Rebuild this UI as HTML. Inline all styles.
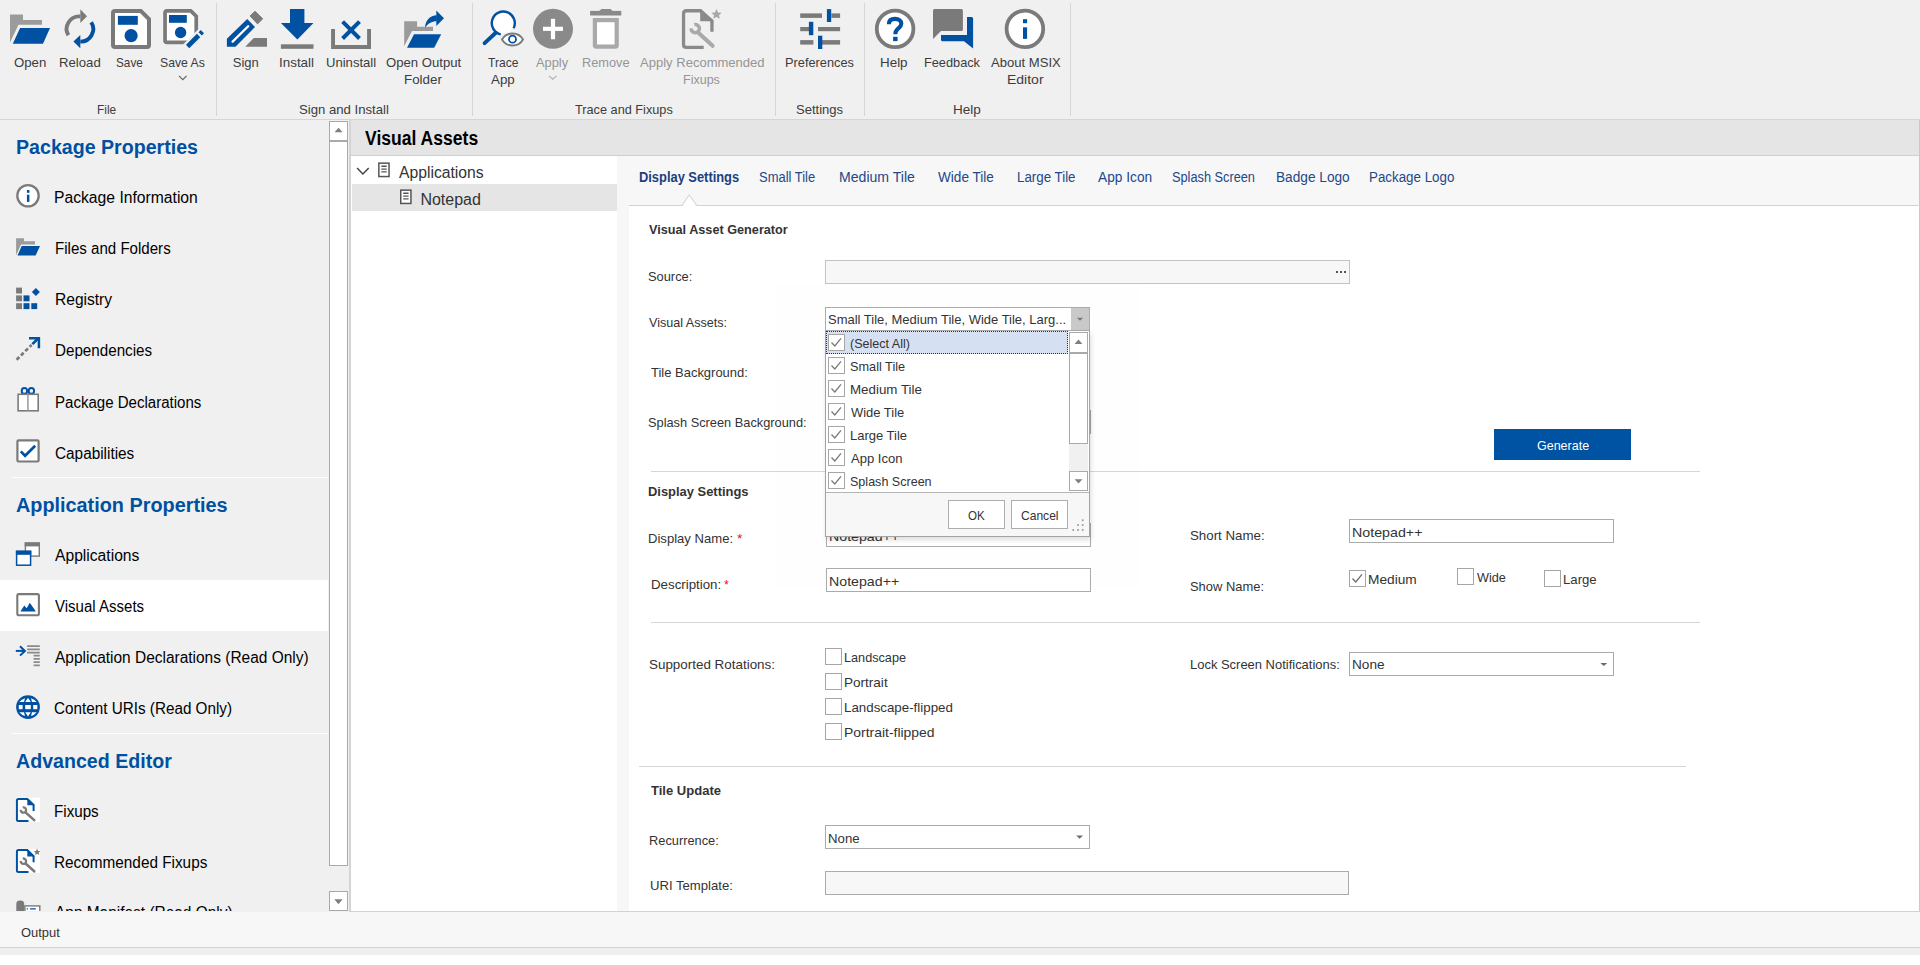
<!DOCTYPE html>
<html><head><meta charset="utf-8"><style>
html,body{margin:0;padding:0;width:1920px;height:965px;overflow:hidden;background:#f0f0f0;position:relative}
.b{position:absolute}
.t{position:absolute;white-space:nowrap;font-family:"Liberation Sans",sans-serif;transform-origin:0 0}
.ov{position:absolute;left:0;top:0}
</style></head><body>
<div class=b style="left:0px;top:0px;width:1920px;height:119px;background:#f0f0f0;"></div>
<div class=b style="left:216px;top:3px;width:1px;height:113px;background:#d6d6d6;"></div>
<div class=b style="left:472px;top:3px;width:1px;height:113px;background:#d6d6d6;"></div>
<div class=b style="left:775px;top:3px;width:1px;height:113px;background:#d6d6d6;"></div>
<div class=b style="left:864px;top:3px;width:1px;height:113px;background:#d6d6d6;"></div>
<div class=b style="left:1070px;top:3px;width:1px;height:113px;background:#d6d6d6;"></div>
<div class=b style="left:0px;top:119px;width:1920px;height:1px;background:#d5d5d5;"></div>
<div class=b style="left:0px;top:120px;width:329px;height:792px;background:#f0f0f0;"></div>
<div class=b style="left:0px;top:580px;width:328px;height:51px;background:#ffffff;"></div>
<div class=b style="left:12px;top:477px;width:316px;height:1px;background:#ffffff;"></div>
<div class=b style="left:12px;top:733px;width:316px;height:1px;background:#ffffff;"></div>
<div class=b style="left:329px;top:120px;width:20px;height:792px;background:#f0f0f0;"></div>
<div class=b style="left:329px;top:121px;width:19px;height:20px;background:#ffffff;border:1px solid #a9a9a9;box-sizing:border-box"></div>
<div class=b style="left:329px;top:141px;width:19px;height:725px;background:#ffffff;border:1px solid #a9a9a9;box-sizing:border-box"></div>
<div class=b style="left:329px;top:891px;width:19px;height:20px;background:#ffffff;border:1px solid #a9a9a9;box-sizing:border-box"></div>
<div class=b style="left:349px;top:120px;width:2px;height:792px;background:#d4d4d4;"></div>
<div class=b style="left:351px;top:120px;width:1569px;height:35px;background:#e5e5e5;"></div>
<div class=b style="left:351px;top:155px;width:1569px;height:1px;background:#d0d0d0;"></div>
<div class=b style="left:1919px;top:120px;width:1px;height:792px;background:#c9c9c9;"></div>
<div class=b style="left:351px;top:156px;width:266px;height:755px;background:#ffffff;"></div>
<div class=b style="left:352px;top:184px;width:265px;height:27px;background:#e5e5e5;"></div>
<div class=b style="left:617px;top:156px;width:1302px;height:49px;background:#f7f7f7;"></div>
<div class=b style="left:617px;top:205px;width:12px;height:706px;background:#f7f7f7;"></div>
<div class=b style="left:629px;top:205px;width:1289px;height:1px;background:#d2d2d2;"></div>
<div class=b style="left:629px;top:206px;width:1290px;height:705px;background:#ffffff;"></div>
<div class=b style="left:775px;top:284px;width:364px;height:303px;background:#fefefe;"></div>
<div class=b style="left:651px;top:471px;width:1049px;height:1px;background:#d6d6d6;"></div>
<div class=b style="left:651px;top:622px;width:1049px;height:1px;background:#d6d6d6;"></div>
<div class=b style="left:639px;top:766px;width:1047px;height:1px;background:#d6d6d6;"></div>
<div class=b style="left:825px;top:260px;width:525px;height:24px;background:#f7f7f7;border:1px solid #c3c3c3;box-sizing:border-box"></div>
<div class=b style="left:825px;top:307px;width:265px;height:24px;background:#ffffff;border:1px solid #ababab;box-sizing:border-box"></div>
<div class=b style="left:1071px;top:308px;width:18px;height:22px;background:#c9c9c9;"></div>
<div class=b style="left:826px;top:523px;width:265px;height:24px;background:#ffffff;border:1px solid #ababab;box-sizing:border-box"></div>
<div class=b style="left:826px;top:568px;width:265px;height:24px;background:#ffffff;border:1px solid #ababab;box-sizing:border-box"></div>
<div class=b style="left:1349px;top:519px;width:265px;height:24px;background:#ffffff;border:1px solid #ababab;box-sizing:border-box"></div>
<div class=b style="left:1349px;top:652px;width:265px;height:24px;background:#ffffff;border:1px solid #ababab;box-sizing:border-box"></div>
<div class=b style="left:825px;top:825px;width:265px;height:24px;background:#ffffff;border:1px solid #ababab;box-sizing:border-box"></div>
<div class=b style="left:825px;top:871px;width:524px;height:24px;background:#f7f7f7;border:1px solid #ababab;box-sizing:border-box"></div>
<div class=b style="left:1494px;top:429px;width:137px;height:31px;background:#0053a2;"></div>
<div class=b style="left:1090px;top:410px;width:1px;height:24px;background:#a3a3a3;"></div>
<div class=b style="left:1349px;top:570px;width:17px;height:17px;background:#ffffff;border:1px solid #a6a6a6;box-sizing:border-box"></div>
<div class=b style="left:1457px;top:568px;width:17px;height:17px;background:#ffffff;border:1px solid #a6a6a6;box-sizing:border-box"></div>
<div class=b style="left:1544px;top:570px;width:17px;height:17px;background:#ffffff;border:1px solid #a6a6a6;box-sizing:border-box"></div>
<div class=b style="left:825px;top:648px;width:17px;height:17px;background:#ffffff;border:1px solid #a6a6a6;box-sizing:border-box"></div>
<div class=b style="left:825px;top:673px;width:17px;height:17px;background:#ffffff;border:1px solid #a6a6a6;box-sizing:border-box"></div>
<div class=b style="left:825px;top:698px;width:17px;height:17px;background:#ffffff;border:1px solid #a6a6a6;box-sizing:border-box"></div>
<div class=b style="left:825px;top:723px;width:17px;height:17px;background:#ffffff;border:1px solid #a6a6a6;box-sizing:border-box"></div>

<svg class=ov width="1920" height="965" viewBox="0 0 1920 965">
<!-- Open -->
<path d="M10,14.6 H23 V20.1 H42 V24.8 H18.5 L10,42.5 Z" fill="#9b9b9b"/>
<path d="M20.1,27.9 H50 L43,43.8 H12.8 Z" fill="#0051a2" stroke="#f0f0f0" stroke-width="2.2" paint-order="stroke"/>
<!-- Reload -->
<path d="M68.3,35.2 A12.6,12.6 0 0 1 80.3,16.4" fill="none" stroke="#7a7a7a" stroke-width="3.9"/>
<path d="M80.3,9.2 L87,16.2 L80.3,23 Z" fill="#7a7a7a"/>
<path d="M91.2,22.2 A12.6,12.6 0 0 1 80.3,41.6" fill="none" stroke="#0051a2" stroke-width="3.9"/>
<path d="M80.3,35 L73.4,41.6 L80.3,48.2 Z" fill="#0051a2"/>
<!-- Save -->
<path d="M115,9 H141.7 L151,18.3 V45 Q151,49 147,49 H115 Q111,49 111,45 V13 Q111,9 115,9 Z" fill="#7a7a7a"/>
<path d="M115,13 H140 L147,20 V45 H115 Z" fill="#fff"/>
<rect x="117.9" y="15.9" width="19.9" height="8.9" fill="#0051a2"/>
<circle cx="131.1" cy="35.7" r="6.6" fill="#0051a2"/>
<!-- Save As -->
<path d="M167,9 H191.5 L198.1,15.6 V40.3 Q198.1,44.3 194.1,44.3 H167 Q163.2,44.3 163.2,40.5 V13 Q163.2,9 167,9 Z" fill="#7a7a7a"/>
<path d="M166.9,12.7 H190 L194.4,17.1 V40.6 H166.9 Z" fill="#fff"/>
<rect x="169" y="15" width="17.8" height="7.8" fill="#0051a2"/>
<circle cx="180.6" cy="32.5" r="5.7" fill="#0051a2"/>
<path d="M183,51 L205,29" stroke="#f0f0f0" stroke-width="9"/>
<path d="M187.6,46.5 L198.6,35.5" stroke="#0051a2" stroke-width="4.6"/>
<path d="M200.2,33.9 L202.4,31.7" stroke="#0051a2" stroke-width="4.6"/>
<path d="M179,75.8 L182.8,79.6 L186.6,75.8" fill="none" stroke="#666" stroke-width="1.2"/>
<!-- Sign -->
<path d="M226.9,38.8 L247.2,19 L255,27.1 L235.5,46.8 H226.9 Z" fill="#0051a2"/>
<path d="M232.6,41.6 L248.2,26.2" stroke="#fff" stroke-width="2.3" stroke-linecap="round"/>
<path d="M250.1,15.9 L255,11.3 L262.7,18.8 L257.5,23.9 Z" fill="#7a7a7a" stroke="#7a7a7a" stroke-width="1" stroke-linejoin="round"/>
<path d="M245.2,46.8 L253.8,38.1 H267 V46.8 Z" fill="#7a7a7a"/>
<!-- Install -->
<path d="M290,9 H304.4 V23 H313.5 L297.4,39.4 L280.9,23 H290 Z" fill="#0051a2"/>
<rect x="280.9" y="44.3" width="32.6" height="4.5" fill="#7a7a7a"/>
<!-- Uninstall -->
<path d="M331.1,29 H335 V45 H367.1 V29 H371 V48.9 H331.1 Z" fill="#7a7a7a"/>
<path d="M342.6,21.6 L359.5,38.5 M359.5,21.6 L342.6,38.5" stroke="#0051a2" stroke-width="4"/>
<!-- Open Output Folder -->
<path d="M404.2,21.2 H417.1 V26.7 H433 V31.1 H412 L404.2,46.3 Z" fill="#9b9b9b"/>
<path d="M414,34.3 H441.2 L434.2,47.7 H407 Z" fill="#0051a2" stroke="#f0f0f0" stroke-width="2.2" paint-order="stroke"/>
<path d="M425,27.8 C425.5,20 430,15.6 436.8,15.3 V21.3 C431.5,21.3 428,23.5 425,27.8 Z" fill="#0051a2"/>
<path d="M436.3,10.4 L444,18.2 L436.3,26 Z" fill="#0051a2"/>
<!-- Trace App -->
<circle cx="503.3" cy="23.1" r="10.5" fill="#fff"/>
<path d="M500.71,34.3 A11.5,11.5 0 1 1 513.55,28.32" fill="none" stroke="#0051a2" stroke-width="2.4"/>
<path d="M484.6,43.1 L495.8,32.8" stroke="#0051a2" stroke-width="3.9" stroke-linecap="round"/>
<path d="M502,39.5 C505,34.2 509,33.5 512.5,33.5 C516,33.5 520,34.2 523,39.5 C520,44.8 516,45.5 512.5,45.5 C509,45.5 505,44.8 502,39.5 Z" fill="#fff" stroke="#7a7a7a" stroke-width="1.9"/>
<circle cx="512.5" cy="39.2" r="3.5" fill="#fff" stroke="#0051a2" stroke-width="1.8"/>
<!-- Apply -->
<circle cx="553" cy="28.8" r="20" fill="#8a8a8a"/>
<rect x="543" y="26.75" width="20" height="4.15" fill="#fff"/>
<rect x="550.9" y="18.8" width="4.2" height="20.45" fill="#fff"/>
<path d="M549,75.9 L552.75,79.2 L556.5,75.9" fill="none" stroke="#b0b0b0" stroke-width="1.2"/>
<!-- Remove -->
<rect x="590.1" y="10.9" width="31.2" height="4.6" fill="#8a8a8a"/>
<path d="M599.2,11 L601.5,9 H610.5 L612.7,11 Z" fill="#8a8a8a"/>
<path d="M592.8,18 H618.8 V45.3 Q618.8,48.8 615.3,48.8 H596.3 Q592.8,48.8 592.8,45.3 Z" fill="#a9a9a9"/>
<rect x="597" y="22.2" width="17.6" height="22.3" fill="#fff"/>
<!-- Apply Recommended Fixups -->
<path d="M711.95,31.7 V21 L700.5,10.75 H686.5 Q683.55,10.75 683.55,13.7 V44.4 Q683.55,47.35 686.5,47.35 H703.7" fill="none" stroke="#8a8a8a" stroke-width="3.3"/>
<path d="M700.2,9 L713.6,21.3 H700.2 Z" fill="#8a8a8a"/>
<path d="M699.2,33.5 L712.6,45.8" stroke="#a9a9a9" stroke-width="4" stroke-linecap="round"/>
<path d="M694.31,24.62 A4.1,4.1 0 1 1 691.21,28.31" fill="none" stroke="#a9a9a9" stroke-width="3.6"/>
<path d="M716.5,9.1 L718.1,12.5 L721.7,12.8 L719,15.2 L719.8,18.8 L716.5,16.9 L713.2,18.8 L714,15.2 L711.3,12.8 L714.9,12.5 Z" fill="#a9a9a9"/>
<!-- Preferences -->
<g fill="#7a7a7a">
<rect x="800.2" y="13.4" width="21.8" height="4.5"/><rect x="831.4" y="13.4" width="8.7" height="4.5"/>
<rect x="800.2" y="27" width="8.9" height="4.2"/><rect x="818" y="27" width="22.1" height="4.2"/>
<rect x="800.2" y="40.1" width="13.2" height="4.5"/><rect x="822" y="40.1" width="18.1" height="4.5"/>
</g>
<g fill="#0051a2">
<rect x="826.9" y="9.1" width="4.3" height="12.9"/><rect x="808.9" y="21.8" width="4.4" height="13.4"/><rect x="818" y="35.7" width="4.3" height="13.3"/>
</g>
<!-- Help -->
<circle cx="895.1" cy="28.9" r="18.3" fill="#fff" stroke="#7a7a7a" stroke-width="3.8"/>
<path d="M888.9,24.2 C888.9,20 891.6,18.9 895.1,18.9 C898.6,18.9 901.3,20.6 901.3,23.6 C901.3,26.8 898.9,27.6 897.4,29.2 C896.4,30.2 895.3,31 895.3,34.2" fill="none" stroke="#0051a2" stroke-width="4.1"/>
<rect x="893.1" y="36.8" width="4.5" height="4.3" fill="#0051a2"/>
<!-- Feedback -->
<path d="M934.5,9 H961.4 Q962.9,9 962.9,10.5 V29.4 Q962.9,30.9 961.4,30.9 H941 L933,39.1 V10.5 Q933,9 934.5,9 Z" fill="#7a7a7a"/>
<path d="M967,17 H971.6 Q973.1,17 973.1,18.5 V48.4 L964,41.3 H942.5 Q941,41.3 941,39.8 V34.9 H967 Z" fill="#0051a2"/>
<!-- About -->
<circle cx="1024.9" cy="28.9" r="18.3" fill="#fff" stroke="#7a7a7a" stroke-width="3.8"/>
<rect x="1023" y="19.2" width="4.1" height="4" fill="#0051a2"/>
<rect x="1023" y="27.3" width="4.1" height="11.6" fill="#0051a2"/>

<!-- NAV ICONS -->
<circle cx="28" cy="195.75" r="10.7" fill="#fff" stroke="#7a7a7a" stroke-width="2.3"/>
<rect x="26.9" y="190" width="2.5" height="2.8" fill="#0051a2"/>
<rect x="26.9" y="194.7" width="2.5" height="7.2" fill="#0051a2"/>

<path d="M16.1,238.2 H24 V241.2 H35 V244.5 H21 L16.1,255.2 Z" fill="#9b9b9b"/>
<path d="M21.7,245.9 H40 L35.6,255.6 H17.5 Z" fill="#0051a2" stroke="#f0f0f0" stroke-width="1.6" paint-order="stroke"/>

<g fill="#7a7a7a"><rect x="16.1" y="287.6" width="5.9" height="5.9"/><rect x="16.1" y="295.4" width="5.9" height="5.9"/><rect x="16.1" y="303.2" width="5.9" height="5.9"/></g>
<g fill="#0051a2"><rect x="23.5" y="295.4" width="6" height="5.9"/><rect x="23.5" y="303.2" width="6" height="5.9"/><rect x="31.3" y="303.2" width="5.9" height="5.9"/>
<path d="M35.9,288 L39.9,292 L35.9,296 L31.9,292 Z"/></g>

<path d="M16.6,359.7 L31.6,344.9" stroke="#7a7a7a" stroke-width="2.7" stroke-dasharray="3.8,2.3"/>
<path d="M32.4,344.1 L38.3,338.3" stroke="#0051a2" stroke-width="2.7"/>
<path d="M29,338.3 H38.9 V348.2" fill="none" stroke="#0051a2" stroke-width="2.5"/>

<ellipse cx="24.4" cy="390.9" rx="2.7" ry="2.9" fill="none" stroke="#0051a2" stroke-width="1.9"/>
<ellipse cx="31.4" cy="390.9" rx="2.7" ry="2.9" fill="none" stroke="#0051a2" stroke-width="1.9"/>
<rect x="18.1" y="394.3" width="20.1" height="16.5" fill="#fff" stroke="#7a7a7a" stroke-width="1.6"/>
<path d="M27.9,394.3 V410.8" stroke="#a0a0a0" stroke-width="1.6"/>

<rect x="17.4" y="440.3" width="21.2" height="21.2" rx="1.2" fill="#fff" stroke="#7a7a7a" stroke-width="2.2"/>
<path d="M20.8,451.4 L25.1,455.8 L35.2,445.8" fill="none" stroke="#0051a2" stroke-width="2.7"/>

<rect x="25.4" y="543.1" width="13.9" height="13" fill="#fff" stroke="#7a7a7a" stroke-width="1.4"/>
<rect x="24.7" y="542.4" width="15.3" height="4" fill="#7a7a7a"/>
<rect x="16.6" y="551.4" width="14" height="13.8" fill="#fff" stroke="#0051a2" stroke-width="1.5"/>
<rect x="15.9" y="550.6" width="15.4" height="4.2" fill="#0051a2"/>

<rect x="17.3" y="594.1" width="21.6" height="21.2" rx="1.5" fill="#fff" stroke="#7a7a7a" stroke-width="2.1"/>
<path d="M20.4,611.4 L24.3,605.5 L26.7,608.2 L29.8,602.8 L35.9,611.4 Z" fill="#0051a2"/>

<path d="M15.8,650.9 H24.4" stroke="#0051a2" stroke-width="2"/>
<path d="M20,646.3 L24.9,650.9 L20,655.6" fill="none" stroke="#0051a2" stroke-width="2"/>
<g stroke="#8a8a8a" stroke-width="1.7"><path d="M27.1,646.1 H39.8 M27.1,649.3 H39.8 M27.1,652.6 H39.8 M33.6,655.7 H39.8 M33.6,658.9 H39.8 M33.6,662.1 H39.8 M33.6,665.3 H39.8"/></g>

<circle cx="28" cy="707.1" r="11.9" fill="#0051a2"/>
<g fill="#fff"><rect x="18.8" y="705" width="3.8" height="4.2"/><rect x="25.2" y="705" width="5.6" height="4.2"/><rect x="33.2" y="705" width="4.1" height="4.2"/>
<path d="M25.2,702 L28,697.7 L30.8,702 Z M19.3,702 L24,702 L25,698.2 Q21.5,699.3 19.3,702 Z M36.7,702 L32,702 L31,698.2 Q34.5,699.3 36.7,702 Z"/>
<path d="M25.2,712.2 L28,716.5 L30.8,712.2 Z M19.3,712.2 L24,712.2 L25,716 Q21.5,714.9 19.3,712.2 Z M36.7,712.2 L32,712.2 L31,716 Q34.5,714.9 36.7,712.2 Z"/></g>

<g transform="translate(0,0)">
<rect x="15.7" y="797.7" width="24.4" height="24.2" fill="#fff"/>
<path d="M33.6,811.1 V805 L27.3,798.9 H18.4 Q16.9,798.9 16.9,800.4 V819.4 Q16.9,820.9 18.4,820.9 H28.5" fill="none" stroke="#0051a2" stroke-width="2"/>
<path d="M27.3,798 L34.6,805.2 H27.3 Z" fill="#0051a2"/>
<path d="M25.8,812.6 L34.2,820.1" stroke="#7a7a7a" stroke-width="2.6" stroke-linecap="round"/>
<path d="M22.75,807.38 A2.7,2.7 0 1 1 20.71,809.81" fill="none" stroke="#7a7a7a" stroke-width="2.3"/>
</g>
<g transform="translate(0,51.2)">
<rect x="15.7" y="797.7" width="24.4" height="24.2" fill="#fff"/>
<path d="M33.6,811.1 V805 L27.3,798.9 H18.4 Q16.9,798.9 16.9,800.4 V819.4 Q16.9,820.9 18.4,820.9 H28.5" fill="none" stroke="#0051a2" stroke-width="2"/>
<path d="M27.3,798 L34.6,805.2 H27.3 Z" fill="#0051a2"/>
<path d="M25.8,812.6 L34.2,820.1" stroke="#7a7a7a" stroke-width="2.6" stroke-linecap="round"/>
<path d="M22.75,807.38 A2.7,2.7 0 1 1 20.71,809.81" fill="none" stroke="#7a7a7a" stroke-width="2.3"/>
</g>
<path d="M37.1,848.6 L38.1,850.9 L40.5,851.1 L38.7,852.6 L39.2,855 L37.1,853.8 L35,855 L35.5,852.6 L33.7,851.1 L36.1,850.9 Z" fill="#7a7a7a"/>
<path d="M16.3,913 V903.8 Q16.3,900.4 20.2,900.4 Q24.2,900.4 24.2,903.8 V913 Z" fill="#7a7a7a"/>
<rect x="24.9" y="905.9" width="14.9" height="8" fill="#fff" stroke="#7a7a7a" stroke-width="1.4"/>
<path d="M26.7,908.9 H28 M30,908.9 H35.8" stroke="#0051a2" stroke-width="1.3"/>

<!-- scroll arrows -->
<path d="M334.5,132.3 L338.55,127.7 L342.6,132.3 Z" fill="#7f7f7f"/>
<path d="M334.3,899.3 L338.45,904.3 L342.6,899.3 Z" fill="#7f7f7f"/>

<!-- tree icons -->
<path d="M357.1,168 L362.9,174 L368.7,168" fill="none" stroke="#444" stroke-width="1.5"/>
<rect x="378.85" y="163.15" width="10.2" height="13.4" fill="#fff" stroke="#555" stroke-width="1.5"/>
<path d="M381.3,166.3 H386.7 M381.3,169.1 H386.7 M381.3,171.9 H386.7" stroke="#555" stroke-width="1.4"/>
<rect x="400.75" y="190.15" width="10.2" height="13.3" fill="#fff" stroke="#555" stroke-width="1.5"/>
<path d="M403.2,193.3 H408.6 M403.2,196.1 H408.6 M403.2,198.9 H408.6" stroke="#555" stroke-width="1.4"/>

<!-- tab notch -->
<path d="M681.9,205.5 L689.3,194.8 L696.8,205.5" fill="#f7f7f7" stroke="#d2d2d2" stroke-width="1"/>
<path d="M682.8,206 L689.3,196.5 L695.9,206 Z" fill="#fff"/>

<!-- combo arrows -->
<path d="M1077,317.8 L1080,320.8 L1083,317.8 Z" fill="#767676"/>
<path d="M1600.4,662.9 L1603.8,666 L1607.2,662.9 Z" fill="#6a6a6a"/>
<path d="M1076.25,835.5 L1079.6,838.75 L1083,835.5 Z" fill="#6a6a6a"/>
<!-- source dots -->
<g fill="#555"><rect x="1336" y="271" width="2" height="2"/><rect x="1340" y="271" width="2" height="2"/><rect x="1344" y="271" width="2" height="2"/></g>
<!-- Medium check -->
<path d="M1352.5,578.5 L1355.8,582 L1362,574.3" fill="none" stroke="#6e6e6e" stroke-width="1.3"/>
</svg>

<div class=t style="left:14.25px;top:56.00px;font-size:13px;line-height:13px;font-weight:400;color:#3c3c3c;transform:scaleX(1.0161)">Open</div>
<div class=t style="left:58.99px;top:56.00px;font-size:13px;line-height:13px;font-weight:400;color:#3c3c3c;transform:scaleX(1.0125)">Reload</div>
<div class=t style="left:116.09px;top:56.00px;font-size:13px;line-height:13px;font-weight:400;color:#3c3c3c;transform:scaleX(0.9052)">Save</div>
<div class=t style="left:160.31px;top:56.00px;font-size:13px;line-height:13px;font-weight:400;color:#3c3c3c;transform:scaleX(0.9415)">Save As</div>
<div class=t style="left:232.75px;top:56.00px;font-size:13px;line-height:13px;font-weight:400;color:#3c3c3c;transform:scaleX(1.0000)">Sign</div>
<div class=t style="left:278.97px;top:56.00px;font-size:13px;line-height:13px;font-weight:400;color:#3c3c3c;transform:scaleX(1.0312)">Install</div>
<div class=t style="left:326.49px;top:56.00px;font-size:13px;line-height:13px;font-weight:400;color:#3c3c3c;transform:scaleX(1.0052)">Uninstall</div>
<div class=t style="left:386.25px;top:56.00px;font-size:13px;line-height:13px;font-weight:400;color:#3c3c3c;transform:scaleX(1.0100)">Open Output</div>
<div class=t style="left:403.97px;top:73.00px;font-size:13px;line-height:13px;font-weight:400;color:#3c3c3c;transform:scaleX(1.0278)">Folder</div>
<div class=t style="left:487.80px;top:56.00px;font-size:13px;line-height:13px;font-weight:400;color:#3c3c3c;transform:scaleX(0.9273)">Trace</div>
<div class=t style="left:491.00px;top:73.00px;font-size:13px;line-height:13px;font-weight:400;color:#3c3c3c;transform:scaleX(1.0261)">App</div>
<div class=t style="left:536.20px;top:56.00px;font-size:13px;line-height:13px;font-weight:400;color:#959595;transform:scaleX(0.9879)">Apply</div>
<div class=t style="left:582.02px;top:56.00px;font-size:13px;line-height:13px;font-weight:400;color:#959595;transform:scaleX(0.9830)">Remove</div>
<div class=t style="left:640.20px;top:56.00px;font-size:13px;line-height:13px;font-weight:400;color:#959595;transform:scaleX(1.0024)">Apply Recommended</div>
<div class=t style="left:683.04px;top:73.00px;font-size:13px;line-height:13px;font-weight:400;color:#959595;transform:scaleX(0.9622)">Fixups</div>
<div class=t style="left:784.82px;top:56.00px;font-size:13px;line-height:13px;font-weight:400;color:#3c3c3c;transform:scaleX(0.9826)">Preferences</div>
<div class=t style="left:879.67px;top:56.00px;font-size:13px;line-height:13px;font-weight:400;color:#3c3c3c;transform:scaleX(1.0308)">Help</div>
<div class=t style="left:924.32px;top:56.00px;font-size:13px;line-height:13px;font-weight:400;color:#3c3c3c;transform:scaleX(0.9804)">Feedback</div>
<div class=t style="left:990.80px;top:56.00px;font-size:13px;line-height:13px;font-weight:400;color:#3c3c3c;transform:scaleX(1.0058)">About MSIX</div>
<div class=t style="left:1006.52px;top:73.00px;font-size:13px;line-height:13px;font-weight:400;color:#3c3c3c;transform:scaleX(1.0758)">Editor</div>
<div class=t style="left:97.34px;top:103.00px;font-size:13px;line-height:13px;font-weight:400;color:#3c3c3c;transform:scaleX(0.9125)">File</div>
<div class=t style="left:298.99px;top:103.00px;font-size:13px;line-height:13px;font-weight:400;color:#3c3c3c;transform:scaleX(1.0115)">Sign and Install</div>
<div class=t style="left:575.00px;top:103.00px;font-size:13px;line-height:13px;font-weight:400;color:#3c3c3c;transform:scaleX(0.9780)">Trace and Fixups</div>
<div class=t style="left:795.80px;top:103.00px;font-size:13px;line-height:13px;font-weight:400;color:#3c3c3c;transform:scaleX(1.0022)">Settings</div>
<div class=t style="left:952.66px;top:103.00px;font-size:13px;line-height:13px;font-weight:400;color:#3c3c3c;transform:scaleX(1.0423)">Help</div>
<div class=t style="left:15.92px;top:137.00px;font-size:20px;line-height:20px;font-weight:700;color:#0050a2;transform:scaleX(0.9804)">Package Properties</div>
<div class=t style="left:54.42px;top:190.00px;font-size:16px;line-height:16px;font-weight:400;color:#000000;transform:scaleX(0.9800)">Package Information</div>
<div class=t style="left:54.66px;top:241.00px;font-size:16px;line-height:16px;font-weight:400;color:#000000;transform:scaleX(0.9426)">Files and Folders</div>
<div class=t style="left:54.63px;top:292.00px;font-size:16px;line-height:16px;font-weight:400;color:#000000;transform:scaleX(0.9724)">Registry</div>
<div class=t style="left:54.65px;top:343.00px;font-size:16px;line-height:16px;font-weight:400;color:#000000;transform:scaleX(0.9495)">Dependencies</div>
<div class=t style="left:54.66px;top:394.50px;font-size:16px;line-height:16px;font-weight:400;color:#000000;transform:scaleX(0.9400)">Package Declarations</div>
<div class=t style="left:54.64px;top:445.50px;font-size:16px;line-height:16px;font-weight:400;color:#000000;transform:scaleX(0.9585)">Capabilities</div>
<div class=t style="left:16.30px;top:494.70px;font-size:20px;line-height:20px;font-weight:700;color:#0050a2;transform:scaleX(0.9915)">Application Properties</div>
<div class=t style="left:55.40px;top:548.30px;font-size:16px;line-height:16px;font-weight:400;color:#000000;transform:scaleX(0.9779)">Applications</div>
<div class=t style="left:55.40px;top:599.00px;font-size:16px;line-height:16px;font-weight:400;color:#000000;transform:scaleX(0.9389)">Visual Assets</div>
<div class=t style="left:55.40px;top:650.00px;font-size:16px;line-height:16px;font-weight:400;color:#000000;transform:scaleX(0.9668)">Application Declarations (Read Only)</div>
<div class=t style="left:54.45px;top:701.00px;font-size:16px;line-height:16px;font-weight:400;color:#000000;transform:scaleX(0.9535)">Content URIs (Read Only)</div>
<div class=t style="left:16.40px;top:751.00px;font-size:20px;line-height:20px;font-weight:700;color:#0050a2;transform:scaleX(0.9805)">Advanced Editor</div>
<div class=t style="left:54.45px;top:804.30px;font-size:16px;line-height:16px;font-weight:400;color:#000000;transform:scaleX(0.9478)">Fixups</div>
<div class=t style="left:54.44px;top:855.40px;font-size:16px;line-height:16px;font-weight:400;color:#000000;transform:scaleX(0.9579)">Recommended Fixups</div>
<div class=t style="left:55.40px;top:905.30px;font-size:16px;line-height:16px;font-weight:400;color:#000000;transform:scaleX(0.9650)">App Manifest (Read Only)</div>
<div class=t style="left:365.10px;top:127.60px;font-size:20px;line-height:20px;font-weight:700;color:#000000;transform:scaleX(0.8773)">Visual Assets</div>
<div class=t style="left:399.20px;top:165.30px;font-size:16px;line-height:16px;font-weight:400;color:#333333;transform:scaleX(0.9814)">Applications</div>
<div class=t style="left:420.40px;top:191.80px;font-size:16px;line-height:16px;font-weight:400;color:#333333;transform:scaleX(1.0000)">Notepad</div>
<div class=t style="left:638.68px;top:169.70px;font-size:14px;line-height:14px;font-weight:700;color:#1b3f80;transform:scaleX(0.9194)">Display Settings</div>
<div class=t style="left:758.58px;top:169.70px;font-size:14px;line-height:14px;font-weight:400;color:#23478a;transform:scaleX(0.9250)">Small Tile</div>
<div class=t style="left:839.39px;top:169.70px;font-size:14px;line-height:14px;font-weight:400;color:#23478a;transform:scaleX(1.0054)">Medium Tile</div>
<div class=t style="left:937.90px;top:169.70px;font-size:14px;line-height:14px;font-weight:400;color:#23478a;transform:scaleX(0.9702)">Wide Tile</div>
<div class=t style="left:1016.65px;top:169.70px;font-size:14px;line-height:14px;font-weight:400;color:#23478a;transform:scaleX(0.9517)">Large Tile</div>
<div class=t style="left:1098.40px;top:169.70px;font-size:14px;line-height:14px;font-weight:400;color:#23478a;transform:scaleX(0.9800)">App Icon</div>
<div class=t style="left:1172.39px;top:169.70px;font-size:14px;line-height:14px;font-weight:400;color:#23478a;transform:scaleX(0.9111)">Splash Screen</div>
<div class=t style="left:1276.42px;top:169.70px;font-size:14px;line-height:14px;font-weight:400;color:#23478a;transform:scaleX(0.9757)">Badge Logo</div>
<div class=t style="left:1369.45px;top:169.70px;font-size:14px;line-height:14px;font-weight:400;color:#23478a;transform:scaleX(0.9534)">Package Logo</div>
<div class=t style="left:648.50px;top:223.00px;font-size:13px;line-height:13px;font-weight:700;color:#333333;transform:scaleX(0.9748)">Visual Asset Generator</div>
<div class=t style="left:647.51px;top:270.00px;font-size:13px;line-height:13px;font-weight:400;color:#333333;transform:scaleX(0.9884)">Source:</div>
<div class=t style="left:648.50px;top:316.00px;font-size:13px;line-height:13px;font-weight:400;color:#333333;transform:scaleX(0.9662)">Visual Assets:</div>
<div class=t style="left:651.10px;top:366.20px;font-size:13px;line-height:13px;font-weight:400;color:#333333;transform:scaleX(0.9979)">Tile Background:</div>
<div class=t style="left:648.22px;top:416.20px;font-size:13px;line-height:13px;font-weight:400;color:#333333;transform:scaleX(0.9843)">Splash Screen Background:</div>
<div class=t style="left:647.71px;top:484.50px;font-size:13px;line-height:13px;font-weight:700;color:#333333;transform:scaleX(0.9940)">Display Settings</div>
<div class=t style="left:648.39px;top:532.00px;font-size:13px;line-height:13px;font-weight:400;color:#333333;transform:scaleX(1.0060)">Display Name:</div>
<div class=t style="left:737.20px;top:532.00px;font-size:13px;line-height:13px;font-weight:400;color:#e81123;transform:scaleX(1.0600)">*</div>
<div class=t style="left:650.58px;top:578.00px;font-size:13px;line-height:13px;font-weight:400;color:#333333;transform:scaleX(1.0224)">Description:</div>
<div class=t style="left:724.20px;top:578.00px;font-size:13px;line-height:13px;font-weight:400;color:#e81123;transform:scaleX(0.9600)">*</div>
<div class=t style="left:649.27px;top:657.70px;font-size:13px;line-height:13px;font-weight:400;color:#333333;transform:scaleX(1.0317)">Supported Rotations:</div>
<div class=t style="left:844.23px;top:651.20px;font-size:13px;line-height:13px;font-weight:400;color:#333333;transform:scaleX(0.9746)">Landscape</div>
<div class=t style="left:844.16px;top:676.20px;font-size:13px;line-height:13px;font-weight:400;color:#333333;transform:scaleX(1.0415)">Portrait</div>
<div class=t style="left:844.18px;top:701.20px;font-size:13px;line-height:13px;font-weight:400;color:#333333;transform:scaleX(1.0248)">Landscape-flipped</div>
<div class=t style="left:844.13px;top:726.20px;font-size:13px;line-height:13px;font-weight:400;color:#333333;transform:scaleX(1.0711)">Portrait-flipped</div>
<div class=t style="left:650.70px;top:784.00px;font-size:13px;line-height:13px;font-weight:700;color:#333333;transform:scaleX(1.0029)">Tile Update</div>
<div class=t style="left:649.01px;top:834.00px;font-size:13px;line-height:13px;font-weight:400;color:#333333;transform:scaleX(0.9855)">Recurrence:</div>
<div class=t style="left:828.48px;top:831.50px;font-size:13px;line-height:13px;font-weight:400;color:#333333;transform:scaleX(1.0167)">None</div>
<div class=t style="left:650.24px;top:879.00px;font-size:13px;line-height:13px;font-weight:400;color:#333333;transform:scaleX(1.0094)">URI Template:</div>
<div class=t style="left:1190.28px;top:529.20px;font-size:13px;line-height:13px;font-weight:400;color:#333333;transform:scaleX(1.0225)">Short Name:</div>
<div class=t style="left:1351.90px;top:525.70px;font-size:13px;line-height:13px;font-weight:400;color:#333333;transform:scaleX(1.0952)">Notepad++</div>
<div class=t style="left:1190.31px;top:580.00px;font-size:13px;line-height:13px;font-weight:400;color:#333333;transform:scaleX(0.9945)">Show Name:</div>
<div class=t style="left:1368.25px;top:573.30px;font-size:13px;line-height:13px;font-weight:400;color:#333333;transform:scaleX(1.0533)">Medium</div>
<div class=t style="left:1477.00px;top:571.20px;font-size:13px;line-height:13px;font-weight:400;color:#333333;transform:scaleX(0.9767)">Wide</div>
<div class=t style="left:1562.99px;top:573.30px;font-size:13px;line-height:13px;font-weight:400;color:#333333;transform:scaleX(1.0125)">Large</div>
<div class=t style="left:1190.30px;top:658.10px;font-size:13px;line-height:13px;font-weight:400;color:#333333;transform:scaleX(0.9966)">Lock Screen Notifications:</div>
<div class=t style="left:1351.95px;top:658.00px;font-size:13px;line-height:13px;font-weight:400;color:#333333;transform:scaleX(1.0467)">None</div>
<div class=t style="left:828.91px;top:574.50px;font-size:13px;line-height:13px;font-weight:400;color:#333333;transform:scaleX(1.0913)">Notepad++</div>
<div class=t style="left:828.91px;top:529.50px;font-size:13px;line-height:13px;font-weight:400;color:#333333;transform:scaleX(1.0913)">Notepad++</div>
<div class=t style="left:1536.50px;top:439.20px;font-size:13px;line-height:13px;font-weight:400;color:#ffffff;transform:scaleX(0.9611)">Generate</div>
<div class=b style="left:0px;top:911px;width:349px;height:1px;background:#f0f0f0;"></div>
<div class=b style="left:349px;top:911px;width:1571px;height:1px;background:#d2d2d2;"></div>
<div class=b style="left:0px;top:912px;width:1920px;height:35px;background:#f7f7f7;"></div>
<div class=b style="left:0px;top:947px;width:1920px;height:1px;background:#d2d2d2;"></div>
<div class=b style="left:0px;top:948px;width:1920px;height:7px;background:#efefef;"></div>
<div class=b style="left:0px;top:955px;width:1920px;height:10px;background:#ffffff;"></div>
<div class=t style="left:20.60px;top:927.00px;font-size:12.5px;line-height:12.5px;font-weight:400;color:#333333;transform:scaleX(1.0342)">Output</div>
<div class=b style='left:825px;top:331px;width:265px;height:206px;box-shadow:1px 3px 5px rgba(0,0,0,0.13)'></div>
<div class=b style="left:825px;top:331px;width:265px;height:206px;background:#f7f7f7;border:1px solid #a3a3a3;box-sizing:border-box"></div>
<div class=b style="left:826px;top:331px;width:263px;height:162px;background:#ffffff;"></div>
<div class=b style="left:826px;top:492px;width:263px;height:1px;background:#b5b5b5;"></div>
<div class=b style="left:826px;top:331px;width:242px;height:23px;background:#d5e1f2;border:1px dotted #333;box-sizing:border-box"></div>
<div class=b style="left:828px;top:334px;width:17px;height:17px;background:#ffffff;border:1px solid #a6a6a6;box-sizing:border-box"></div>
<div class=b style="left:828px;top:357px;width:17px;height:17px;background:#ffffff;border:1px solid #a6a6a6;box-sizing:border-box"></div>
<div class=b style="left:828px;top:380px;width:17px;height:17px;background:#ffffff;border:1px solid #a6a6a6;box-sizing:border-box"></div>
<div class=b style="left:828px;top:403px;width:17px;height:17px;background:#ffffff;border:1px solid #a6a6a6;box-sizing:border-box"></div>
<div class=b style="left:828px;top:426px;width:17px;height:17px;background:#ffffff;border:1px solid #a6a6a6;box-sizing:border-box"></div>
<div class=b style="left:828px;top:449px;width:17px;height:17px;background:#ffffff;border:1px solid #a6a6a6;box-sizing:border-box"></div>
<div class=b style="left:828px;top:472px;width:17px;height:17px;background:#ffffff;border:1px solid #a6a6a6;box-sizing:border-box"></div>
<div class=b style="left:1069px;top:332px;width:19px;height:159px;background:#f0f0f0;"></div>
<div class=b style="left:1069px;top:332px;width:19px;height:21px;background:#ffffff;border:1px solid #a9a9a9;box-sizing:border-box"></div>
<div class=b style="left:1069px;top:353px;width:19px;height:91px;background:#ffffff;border:1px solid #a9a9a9;box-sizing:border-box"></div>
<div class=b style="left:1069px;top:471px;width:19px;height:20px;background:#ffffff;border:1px solid #a9a9a9;box-sizing:border-box"></div>
<div class=b style="left:948px;top:500px;width:57px;height:29px;background:#ffffff;border:1px solid #adadad;box-sizing:border-box"></div>
<div class=b style="left:1011px;top:500px;width:57px;height:29px;background:#ffffff;border:1px solid #adadad;box-sizing:border-box"></div>
<svg class=ov width="1920" height="965" viewBox="0 0 1920 965">
<path d="M831.5,342.5 L834.8,346 L841,338.3" fill="none" stroke="#7a7a7a" stroke-width="1.3"/><path d="M831.5,365.5 L834.8,369 L841,361.3" fill="none" stroke="#7a7a7a" stroke-width="1.3"/><path d="M831.5,388.5 L834.8,392 L841,384.3" fill="none" stroke="#7a7a7a" stroke-width="1.3"/><path d="M831.5,411.5 L834.8,415 L841,407.3" fill="none" stroke="#7a7a7a" stroke-width="1.3"/><path d="M831.5,434.5 L834.8,438 L841,430.3" fill="none" stroke="#7a7a7a" stroke-width="1.3"/><path d="M831.5,457.5 L834.8,461 L841,453.3" fill="none" stroke="#7a7a7a" stroke-width="1.3"/><path d="M831.5,480.5 L834.8,484 L841,476.3" fill="none" stroke="#7a7a7a" stroke-width="1.3"/>
<path d="M1074.6,344 L1078.5,339.6 L1082.4,344 Z" fill="#7f7f7f"/>
<path d="M1074.6,479.2 L1078.5,483.6 L1082.4,479.2 Z" fill="#7f7f7f"/>
<g fill="#9a9a9a"><circle cx="1082.7" cy="520.2" r="1"/><circle cx="1078" cy="525" r="1"/><circle cx="1082.7" cy="525" r="1"/><circle cx="1073.2" cy="530" r="1"/><circle cx="1078" cy="530" r="1"/><circle cx="1082.7" cy="530" r="1"/></g>
</svg>
<div class=t style="left:828.10px;top:312.70px;font-size:13px;line-height:13px;font-weight:400;color:#333333;transform:scaleX(0.9987)">Small Tile, Medium Tile, Wide Tile, Larg...</div>
<div class=t style="left:850.43px;top:336.80px;font-size:13px;line-height:13px;font-weight:400;color:#333333;transform:scaleX(0.9656)">(Select All)</div>
<div class=t style="left:850.42px;top:359.80px;font-size:13px;line-height:13px;font-weight:400;color:#333333;transform:scaleX(0.9782)">Small Tile</div>
<div class=t style="left:850.37px;top:382.80px;font-size:13px;line-height:13px;font-weight:400;color:#333333;transform:scaleX(1.0261)">Medium Tile</div>
<div class=t style="left:851.40px;top:405.80px;font-size:13px;line-height:13px;font-weight:400;color:#333333;transform:scaleX(0.9962)">Wide Tile</div>
<div class=t style="left:850.40px;top:428.80px;font-size:13px;line-height:13px;font-weight:400;color:#333333;transform:scaleX(0.9982)">Large Tile</div>
<div class=t style="left:851.40px;top:451.80px;font-size:13px;line-height:13px;font-weight:400;color:#333333;transform:scaleX(1.0039)">App Icon</div>
<div class=t style="left:850.43px;top:474.80px;font-size:13px;line-height:13px;font-weight:400;color:#333333;transform:scaleX(0.9651)">Splash Screen</div>
<div class=t style="left:967.60px;top:509.20px;font-size:13px;line-height:13px;font-weight:400;color:#333333;transform:scaleX(0.8895)">OK</div>
<div class=t style="left:1020.60px;top:509.20px;font-size:13px;line-height:13px;font-weight:400;color:#333333;transform:scaleX(0.9275)">Cancel</div>
</body></html>
